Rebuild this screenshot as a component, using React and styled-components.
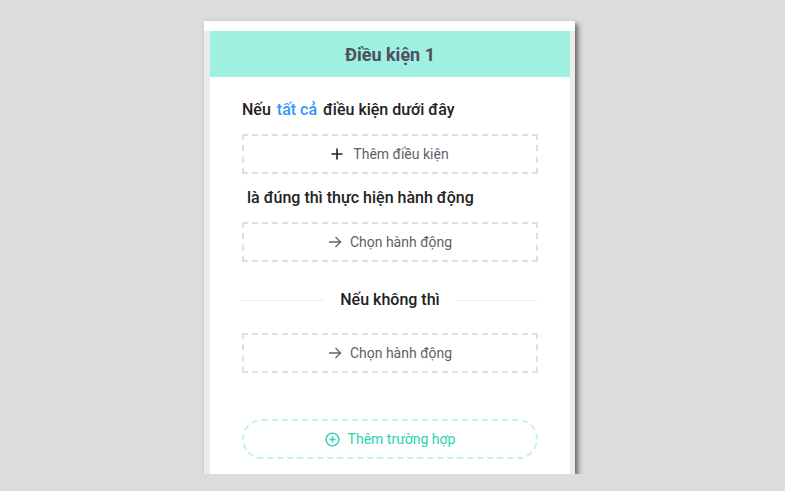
import React from "react";
import styled, { createGlobalStyle } from "styled-components";

const Global = createGlobalStyle`
  html, body { margin: 0; padding: 0; background: #dcdcdc; }
  body { font-family: Roboto, "Noto Sans", Arial, sans-serif; }
`;

const Page = styled.div`
  padding: 21px 0 0 204px;
`;

const Card = styled.div`
  width: 371px;
  height: 453px;
  box-sizing: border-box;
  background: #fff;
  padding-top: 10px;
  box-shadow: 3px 3px 5px rgba(0, 0, 0, 0.55);
`;

const Inner = styled.div`
  height: 443px;
  box-sizing: border-box;
  border-left: 6px solid #ececec;
  border-right: 5px solid #ececec;
  display: flex;
  flex-direction: column;
`;

const Header = styled.div`
  height: 46px;
  background: #9ff0e0;
  display: flex;
  align-items: center;
  justify-content: center;
  font-size: 18px;
  font-weight: 700;
  color: #4e4e5e;
`;

const Body = styled.div`
  padding: 21px 32px 0;
  display: flex;
  flex-direction: column;
`;

const Title = styled.div`
  font-size: 16px;
  line-height: 24px;
  font-weight: 500;
  color: #222;
  padding-left: ${(p) => p.$indent || 0}px;
  margin-bottom: 12px;
`;

const Link = styled.span`
  color: #2f96ff;
  margin: 0 2px;
`;

const DashedBox = styled.div`
  height: 40px;
  box-sizing: border-box;
  border: 2px dashed #dfe0e4;
  display: flex;
  align-items: center;
  justify-content: center;
  gap: ${(p) => p.$gap || 8}px;
  font-size: 14px;
  color: #5f5f66;
  margin-bottom: ${(p) => p.$mb || 0}px;
`;

const Divider = styled.div`
  display: flex;
  align-items: center;
  gap: 16px;
  margin: 26px 0 21px;
  font-size: 16px;
  line-height: 24px;
  font-weight: 500;
  color: #222;
  &::before, &::after {
    content: "";
    flex: 1;
    height: 1px;
    background: #eeeeee;
  }
`;

const AddCase = styled.div`
  margin-top: 46px;
  height: 40px;
  box-sizing: border-box;
  border: 2px dashed #c4f3ea;
  border-radius: 20px;
  display: flex;
  align-items: center;
  justify-content: center;
  gap: 8px;
  font-size: 14px;
  color: #27d3b0;
`;

const Plus = () => (
  <svg width="12" height="12" viewBox="0 0 12 12">
    <path d="M6 0.5v11M0.5 6h11" stroke="#222" strokeWidth="1.6" />
  </svg>
);

const Arrow = () => (
  <svg width="14" height="12" viewBox="0 0 14 12">
    <path d="M1 6h12M7.5 1l5 5-5 5" stroke="#666" strokeWidth="1.3" fill="none" />
  </svg>
);

const CirclePlus = () => (
  <svg width="15" height="15" viewBox="0 0 16 16">
    <circle cx="8" cy="8" r="6.8" stroke="#27d3b0" strokeWidth="1.5" fill="none" />
    <path d="M8 4.8v6.4M4.8 8h6.4" stroke="#27d3b0" strokeWidth="1.5" />
  </svg>
);

export default function App() {
  return (
    <>
      <Global />
      <Page>
        <Card>
          <Inner>
            <Header>Điều kiện 1</Header>
            <Body>
              <Title>
                Nếu <Link>tất cả</Link> điều kiện dưới đây
              </Title>
              <DashedBox $mb={12} $gap={10}>
                <Plus />
                Thêm điều kiện
              </DashedBox>
              <Title $indent={5}>là đúng thì thực hiện hành động</Title>
              <DashedBox>
                <Arrow />
                Chọn hành động
              </DashedBox>
              <Divider>Nếu không thì</Divider>
              <DashedBox>
                <Arrow />
                Chọn hành động
              </DashedBox>
              <AddCase>
                <CirclePlus />
                Thêm trường hợp
              </AddCase>
            </Body>
          </Inner>
        </Card>
      </Page>
    </>
  );
}
